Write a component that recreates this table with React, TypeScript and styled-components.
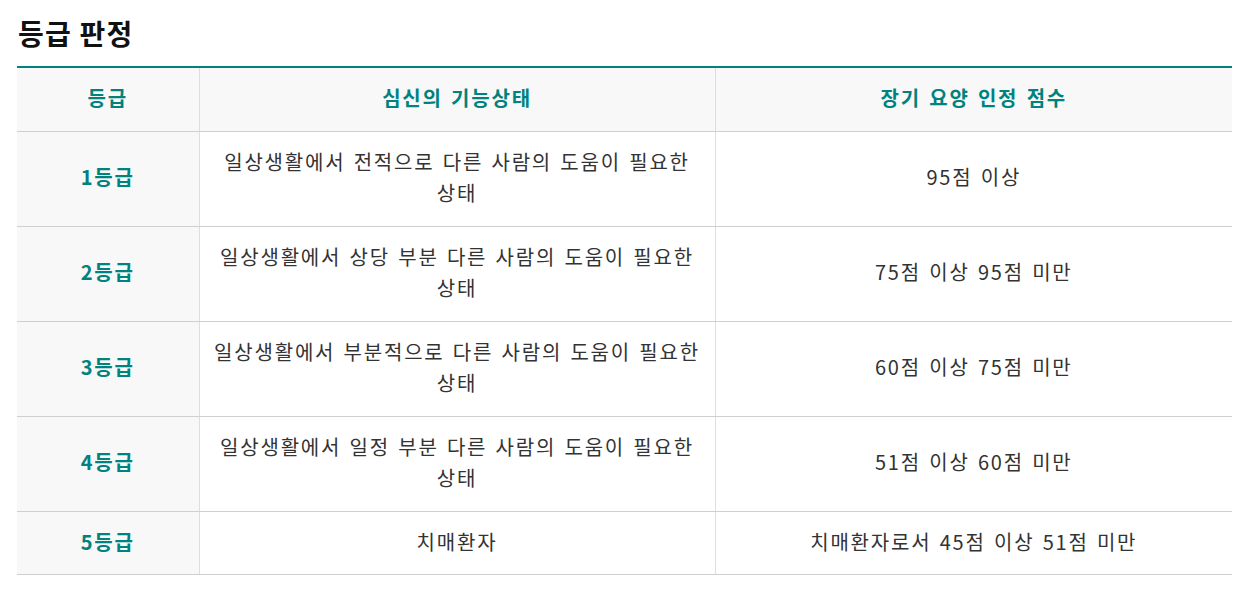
import styled, { createGlobalStyle } from "styled-components";

const GlobalStyle = createGlobalStyle`
  body {
    margin: 0;
    background: #fff;
    font-family: "Noto Sans CJK KR", "Noto Sans", sans-serif;
  }
`;

const Wrapper = styled.section`
  padding: 16px 25px 0 17px;
`;

const Title = styled.h2`
  margin: 0 0 16px 1px;
  font-size: 28px;
  font-weight: 700;
  letter-spacing: 1.2px;
  color: #111;
  line-height: 34px;
`;

const Table = styled.table`
  width: 100%;
  border-collapse: collapse;
  border-top: 2px solid #00827e;
  table-layout: fixed;
`;

const baseCell = `
  box-sizing: border-box;
  font-size: 20px;
  letter-spacing: 1.8px;
  word-spacing: 2px;
  line-height: 31.5px;
  padding: 14px 8px 17px;
  word-break: keep-all;
  border-bottom: 1px solid #cfcfcf;
`;

const HeadCell = styled.th<{ w?: number }>`
  ${baseCell}
  width: ${(p) => (p.w ? `${p.w}px` : "auto")};
  background: #f8f8f8;
  color: #00827e;
  font-weight: 700;
  border-left: 1px solid #dedede;
  &:first-child {
    border-left: none;
  }
`;

const GradeCell = styled.th`
  ${baseCell}
  background: #f8f8f8;
  color: #00827e;
  font-weight: 700;
`;

const Cell = styled.td`
  ${baseCell}
  text-align: center;
  color: #333;
  border-left: 1px solid #dedede;
`;

const rows = [
  { grade: "1등급", state: "일상생활에서 전적으로 다른 사람의 도움이 필요한 상태", score: "95점 이상" },
  { grade: "2등급", state: "일상생활에서 상당 부분 다른 사람의 도움이 필요한 상태", score: "75점 이상 95점 미만" },
  { grade: "3등급", state: "일상생활에서 부분적으로 다른 사람의 도움이 필요한 상태", score: "60점 이상 75점 미만" },
  { grade: "4등급", state: "일상생활에서 일정 부분 다른 사람의 도움이 필요한 상태", score: "51점 이상 60점 미만" },
  { grade: "5등급", state: "치매환자", score: "치매환자로서 45점 이상 51점 미만" },
];

export default function App() {
  return (
    <>
      <GlobalStyle />
      <Wrapper>
        <Title>등급 판정</Title>
        <Table>
          <thead>
            <tr>
              <HeadCell w={182}>등급</HeadCell>
              <HeadCell w={516}>심신의 기능상태</HeadCell>
              <HeadCell>장기 요양 인정 점수</HeadCell>
            </tr>
          </thead>
          <tbody>
            {rows.map((r) => (
              <tr key={r.grade}>
                <GradeCell>{r.grade}</GradeCell>
                <Cell>{r.state}</Cell>
                <Cell>{r.score}</Cell>
              </tr>
            ))}
          </tbody>
        </Table>
      </Wrapper>
    </>
  );
}
